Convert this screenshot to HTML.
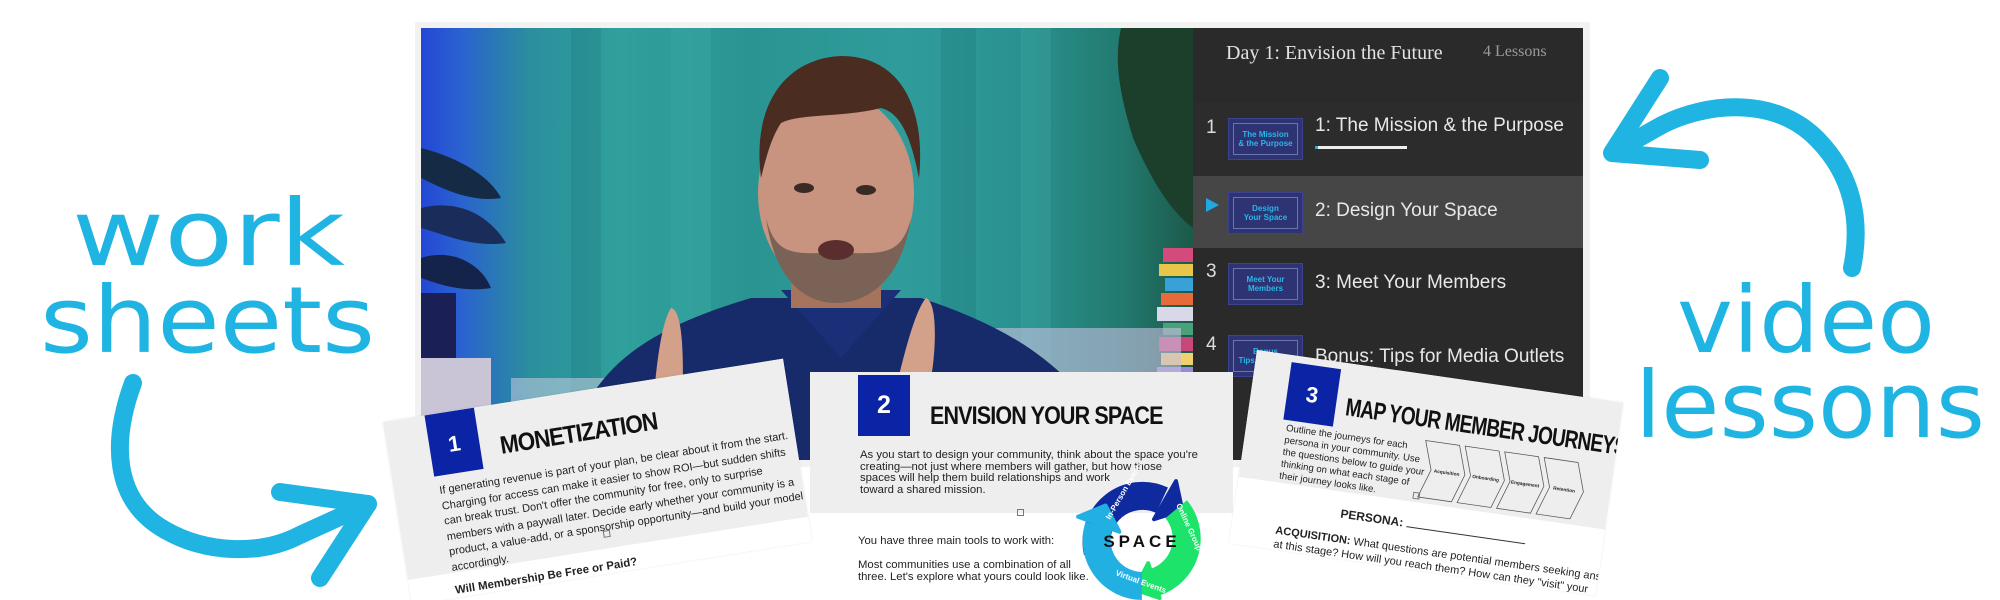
<!DOCTYPE html>
<html style="width:2000px;height:600px;overflow:hidden"><head><meta charset="utf-8">
<style>
*{margin:0;padding:0;box-sizing:border-box}
body{width:2000px;height:600px;overflow:hidden;background:#fff;position:relative;font-family:"Liberation Sans",sans-serif}
.abs{position:absolute}
#frame{left:415px;top:22px;width:1175px;height:445px;background:#f2f2f2}
#video{left:421px;top:28px;width:772px;height:432px;overflow:hidden;
background:linear-gradient(90deg,#2447d6 0px,#2a62d0 40px,#2b8f9c 110px,#30a09c 200px,#2a9492 330px,#2f9c9b 480px,#2a9290 600px,#227a70 700px,#1c5a4a 772px)}
#side{left:1193px;top:28px;width:390px;height:432px;background:#2a2a2a;color:#e6e6e6}
.row{position:absolute;left:0;width:390px}
.num{position:absolute;left:13px;font-size:19px;color:#ddd}
.thumb{position:absolute;left:35px;width:75px;height:42px;background:#2e3473;border:1px solid #3b4390}
.thumb:after{content:"";position:absolute;left:4px;top:4px;right:4px;bottom:4px;border:1px solid #6d75b0}
.thumb span{position:absolute;left:0;right:0;top:11px;text-align:center;font-size:8px;line-height:9px;font-weight:bold;color:#2ab6e8}
.ttl{position:absolute;left:122px;font-size:19px;color:#e8e8e8;white-space:nowrap}
.card{position:absolute;background:#fff;overflow:hidden}
.gray{background:#eeeeee}
.blue{position:absolute;background:#0b24a5;color:#fff;font-weight:bold;text-align:center}
.h{position:absolute;font-weight:900;color:#111;white-space:nowrap;letter-spacing:-1px}
.txt{position:absolute;color:#222;white-space:nowrap}
</style></head><body>
<div id="frame" class="abs"></div>
<div id="video" class="abs">
<svg width="772" height="432" viewBox="0 0 772 432" style="position:absolute;left:0;top:0">
 <g opacity="0.25">
  <rect x="150" y="0" width="30" height="432" fill="#1d6f78"/>
  <rect x="250" y="0" width="40" height="432" fill="#44b2ab"/>
  <rect x="520" y="0" width="35" height="432" fill="#1b6e72"/>
  <rect x="600" y="0" width="30" height="432" fill="#46b0a8"/>
 </g>
 <path d="M0,120 C40,130 70,150 80,170 C50,175 20,160 0,150Z" fill="#152a45"/>
 <path d="M0,180 C40,170 70,190 85,215 C50,220 20,205 0,200Z" fill="#1a2d5a"/>
 <path d="M0,230 C30,220 60,235 70,260 C40,265 15,255 0,250Z" fill="#14234a"/>
 <rect x="0" y="265" width="35" height="80" fill="#1a1f55"/>
 <rect x="0" y="330" width="70" height="110" fill="#c9c5d6"/>
 <path d="M700,0 L772,0 L772,200 C745,180 725,140 712,110 C700,70 692,35 700,0Z" fill="#1b3f2a"/>
 <g>
  <rect x="742" y="220" width="30" height="14" fill="#d44a7a"/>
  <rect x="738" y="236" width="34" height="12" fill="#e8c64a"/>
  <rect x="744" y="250" width="28" height="13" fill="#3aa0d8"/>
  <rect x="740" y="265" width="32" height="12" fill="#e66a3a"/>
  <rect x="736" y="279" width="36" height="14" fill="#d8d8e8"/>
  <rect x="742" y="295" width="30" height="12" fill="#4aa07a"/>
  <rect x="738" y="309" width="34" height="14" fill="#c7477a"/>
  <rect x="740" y="325" width="32" height="12" fill="#f0d070"/>
  <rect x="736" y="339" width="36" height="14" fill="#9a8ad8"/>
 </g>
 <rect x="500" y="300" width="260" height="140" fill="#c8c0e0" opacity="0.6"/>
 <rect x="90" y="350" width="200" height="90" fill="#d8d4e8" opacity="0.5"/>
 <path d="M150,432 C160,340 230,300 330,270 L500,270 C590,300 660,340 700,432Z" fill="#172a6a"/>
 <path d="M360,262 L420,330 L480,262Z" fill="#1b2f78"/>
 <rect x="370" y="220" width="90" height="60" fill="#a6745c"/>
 <ellipse cx="415" cy="165" rx="78" ry="100" fill="#c89480"/>
 <path d="M340,150 C330,70 370,30 420,28 C480,28 505,80 498,150 C490,110 480,85 460,80 C420,90 380,85 360,95 C350,110 345,130 340,150Z" fill="#4a2c20"/>
 <path d="M345,190 C355,260 390,275 415,275 C445,275 480,255 490,190 C480,230 460,225 415,225 C375,225 355,230 345,190Z" fill="#7a6256"/>
 <ellipse cx="383" cy="160" rx="10" ry="5" fill="#3a2a24"/>
 <ellipse cx="445" cy="162" rx="10" ry="5" fill="#3a2a24"/>
 <ellipse cx="415" cy="222" rx="18" ry="10" fill="#5a2e2e"/>
 <path d="M232,380 C235,340 240,295 250,280 C262,282 262,330 262,350 C280,345 300,350 305,380 C300,410 260,420 232,400Z" fill="#d3a08a"/>
 <path d="M470,380 C480,340 492,285 505,270 C518,275 514,330 510,350 C528,348 550,360 545,390 C530,420 480,420 470,400Z" fill="#d3a08a"/>
</svg>
</div>
<div id="side" class="abs">
 <div style="position:absolute;left:33px;top:14px;font-family:'Liberation Serif',serif;font-size:20px;color:#e2e2e2">Day 1: Envision the Future</div>
 <div style="position:absolute;left:290px;top:15px;font-family:'Liberation Serif',serif;font-size:16px;color:#9a9a9a">4 Lessons</div>
 <div class="row" style="top:74px;height:74px;background:#2c2c2c">
  <div class="num" style="top:15px">1</div>
  <div class="thumb" style="top:16px"><span>The Mission<br>&amp; the Purpose</span></div>
  <div class="ttl" style="top:13px">1: The Mission &amp; the Purpose</div>
  <div style="position:absolute;left:122px;top:44px;width:92px;height:3px;background:#eee"></div>
  <div style="position:absolute;left:122px;top:44px;width:3px;height:3px;background:#2ab0e0"></div>
 </div>
 <div class="row" style="top:148px;height:72px;background:#464646">
  <div style="position:absolute;left:13px;top:22px;width:0;height:0;border-top:7px solid transparent;border-bottom:7px solid transparent;border-left:13px solid #22a8e0"></div>
  <div class="thumb" style="top:16px"><span>Design<br>Your Space</span></div>
  <div class="ttl" style="top:24px">2: Design Your Space</div>
 </div>
 <div class="row" style="top:220px;height:72px">
  <div class="num" style="top:13px">3</div>
  <div class="thumb" style="top:15px"><span>Meet Your<br>Members</span></div>
  <div class="ttl" style="top:24px">3: Meet Your Members</div>
 </div>
 <div class="row" style="top:292px;height:72px">
  <div class="num" style="top:14px">4</div>
  <div class="thumb" style="top:15px"><span>Bonus<br>Tips for Media</span></div>
  <div class="ttl" style="top:26px">Bonus: Tips for Media Outlets</div>
 </div>
</div>

<div class="card" style="left:810px;top:372px;width:423px;height:228px">
 <div class="gray" style="position:absolute;left:0;top:0;width:423px;height:141px"></div>
 <div class="blue" style="left:48px;top:3px;width:52px;height:61px;font-size:25px;line-height:61px">2</div>
 <div class="h" style="left:120px;top:30px;font-size:25px;transform:scaleX(.86);transform-origin:left">ENVISION YOUR SPACE</div>
 <div class="txt" style="left:50px;top:78px;font-size:11.3px;line-height:11.5px">As you start to design your community, think about the space you're<br>creating—not just where members will gather, but how those<br>spaces will help them build relationships and work<br>toward a shared mission.</div>
 <div class="abs" style="left:207px;top:137px;width:7px;height:7px;border:1px solid #777"></div>
 <div class="txt" style="left:48px;top:163px;font-size:11.3px;line-height:12px">You have three main tools to work with:<br><br>Most communities use a combination of all<br>three. Let's explore what yours could look like.</div>
</div>

<div class="card" style="left:383px;top:422px;width:405px;height:185px;transform:rotate(-9deg);transform-origin:0 0;box-shadow:0 0 2px rgba(0,0,0,.1)">
 <div class="gray" style="position:absolute;left:0;top:0;width:405px;height:160px"></div>
 <div class="blue" style="left:42px;top:0;width:50px;height:62px;font-size:22px;line-height:66px">1</div>
 <div class="h" style="left:112px;top:28px;font-size:25px;transform:scaleX(.9);transform-origin:left">MONETIZATION</div>
 <div class="txt" style="left:45px;top:70px;font-size:11px;line-height:15.5px">If generating revenue is part of your plan, be clear about it from the start.<br>Charging for access can make it easier to show ROI—but sudden shifts<br>can break trust. Don't offer the community for free, only to surprise<br>members with a paywall later. Decide early whether your community is a<br>product, a value-add, or a sponsorship opportunity—and build your model<br>accordingly.</div>
 <div class="abs" style="left:200px;top:142px;width:7px;height:7px;border:1px solid #777"></div>
 <div class="txt" style="left:45px;top:172px;font-size:11.4px;font-weight:bold">Will Membership Be Free or Paid?</div>
</div>

<div class="card" style="left:1257px;top:350px;width:370px;height:195px;transform:rotate(8.2deg);transform-origin:0 0;box-shadow:0 0 2px rgba(0,0,0,.1)">
 <div class="gray" style="position:absolute;left:0;top:0;width:370px;height:128px"></div>
 <div class="blue" style="left:36px;top:7px;width:50px;height:58px;font-size:22px;line-height:60px">3</div>
 <div class="h" style="left:96px;top:30px;font-size:25px;transform:scaleX(.76);transform-origin:left">MAP YOUR MEMBER JOURNEYS</div>
 <div class="txt" style="left:40px;top:68px;font-size:9.6px;line-height:12px">Outline the journeys for each<br>persona in your community. Use<br>the questions below to guide your<br>thinking on what each stage of<br>their journey looks like.</div>
 <svg class="abs" style="left:178px;top:62px" width="190" height="64" viewBox="0 0 200 64">
  <g fill="none" stroke="#555" stroke-width="0.8">
   <path d="M2,2 L38,2 L48,32 L38,62 L2,62 L12,32Z"/>
   <path d="M44,2 L80,2 L90,32 L80,62 L44,62 L54,32Z"/>
   <path d="M86,2 L122,2 L132,32 L122,62 L86,62 L96,32Z"/>
   <path d="M128,2 L164,2 L174,32 L164,62 L128,62 L138,32Z"/>
  </g>
  <g font-size="5" font-weight="bold" fill="#222" font-family="Liberation Sans">
   <text x="15" y="34">Acquisition</text><text x="56" y="34">Onboarding</text><text x="97" y="34">Engagement</text><text x="142" y="34">Retention</text>
  </g>
 </svg>
 <div class="abs" style="left:175px;top:118px;width:7px;height:7px;border:1px solid #777"></div>
 <div class="txt" style="left:106px;top:143px;font-size:12px;font-weight:bold">PERSONA: <span style="display:inline-block;width:120px;border-bottom:1px solid #333"></span></div>
 <div class="txt" style="left:44px;top:170px;font-size:11px;line-height:13.5px"><b>ACQUISITION:</b> What questions are potential members seeking answers to<br>at this stage? How will you reach them? How can they "visit" your</div>
</div>

<svg class="abs" style="left:0;top:0" width="2000" height="600" viewBox="0 0 2000 600">
 <path d="M1097.6,551.9 A46,46 0 0 1 1162,500.2" stroke="#0f2a9e" stroke-width="28" fill="none"/>
 <path d="M1176,481.1 L1154,519.2 L1182.3,510.2Z" fill="#0f2a9e" stroke="#0f2a9e" stroke-width="4" stroke-linejoin="round"/>
 <path d="M1176.2,509.2 A46,46 0 0 1 1155.5,582" stroke="#1ee36a" stroke-width="28" fill="none"/>
 <path d="M1159.6,598 L1148.2,563.2 L1134.6,589.6Z" fill="#1ee36a" stroke="#1ee36a" stroke-width="4" stroke-linejoin="round"/>
 <path d="M1142,586 A46,46 0 0 1 1098.8,526" stroke="#22b0e3" stroke-width="28" fill="none"/>
 <path d="M1078.1,516.7 L1119.4,531.8 L1105.6,505.5Z" fill="#22b0e3" stroke="#22b0e3" stroke-width="4" stroke-linejoin="round"/>
 <text x="1142" y="547" text-anchor="middle" font-family="Liberation Sans" font-weight="bold" font-size="17" letter-spacing="4" fill="#111">SPACE</text>
 <g font-family="Liberation Sans" font-weight="bold" font-size="8" fill="#fff">
  <text transform="translate(1110,520) rotate(-60)">In-Person Events</text>
  <text transform="translate(1176,505) rotate(65)">Online Group</text>
  <text transform="translate(1115,575) rotate(20)">Virtual Events</text>
 </g>
 <g fill="#1fb4e2" font-family="DejaVu Sans" font-size="92">
  <text x="72" y="265" textLength="273" lengthAdjust="spacingAndGlyphs">work</text>
  <text x="40" y="352" textLength="335" lengthAdjust="spacingAndGlyphs">sheets</text>
  <text x="1677" y="352" textLength="258" lengthAdjust="spacingAndGlyphs">video</text>
  <text x="1635" y="437" textLength="350" lengthAdjust="spacingAndGlyphs">lessons</text>
 </g>
 <g fill="none" stroke="#1fb4e2" stroke-width="18" stroke-linecap="round" stroke-linejoin="round">
  <path d="M133,383 C112,440 112,500 165,530 C205,553 260,556 300,535 L368,504"/>
  <path d="M280,492 L368,504 L320,578"/>
  <path d="M1614,152 L1662,125 C1705,103 1775,95 1818,140 C1852,175 1862,220 1852,268"/>
  <path d="M1660,78 L1612,153 L1700,160"/>
 </g>
</svg>
</body></html>
